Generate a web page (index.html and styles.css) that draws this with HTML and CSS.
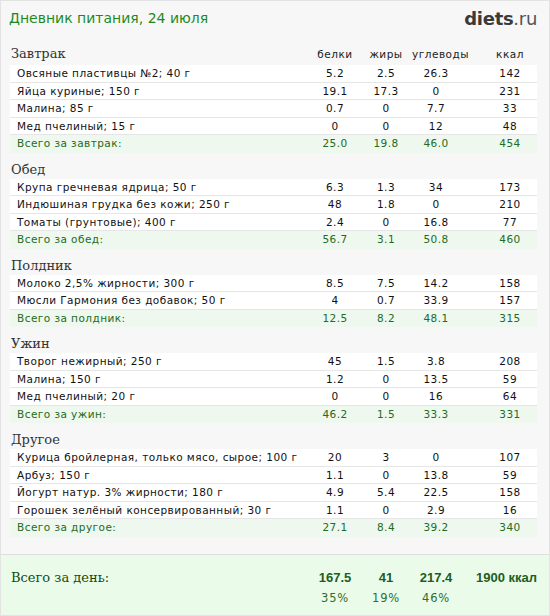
FILE: index.html
```html
<!DOCTYPE html>
<html lang="ru">
<head>
<meta charset="utf-8">
<title>Дневник питания</title>
<link rel="stylesheet" href="styles.css">
</head>
<body>
<div class="page">
  <div class="top">
    <div class="title">Дневник питания, 24 июля</div>
    <div class="logo"><b>diets</b>.ru</div>
  </div>

  <div class="content">
    <div class="sec-head first">
      <span class="sec-name">Завтрак</span>
      <span class="c">белки</span><span class="c">жиры</span><span class="c">углеводы</span><span class="c k">ккал</span>
    </div>
    <div class="tbl">
      <div class="row"><span class="n">Овсяные пластивцы №2; 40 г</span><span class="c">5.2</span><span class="c">2.5</span><span class="c">26.3</span><span class="c k">142</span></div>
      <div class="row"><span class="n">Яйца куриные; 150 г</span><span class="c">19.1</span><span class="c">17.3</span><span class="c">0</span><span class="c k">231</span></div>
      <div class="row"><span class="n">Малина; 85 г</span><span class="c">0.7</span><span class="c">0</span><span class="c">7.7</span><span class="c k">33</span></div>
      <div class="row"><span class="n">Мед пчелиный; 15 г</span><span class="c">0</span><span class="c">0</span><span class="c">12</span><span class="c k">48</span></div>
      <div class="row total"><span class="n">Всего за завтрак:</span><span class="c">25.0</span><span class="c">19.8</span><span class="c">46.0</span><span class="c k">454</span></div>
    </div>

    <div class="sec-head"><span class="sec-name">Обед</span></div>
    <div class="tbl">
      <div class="row"><span class="n">Крупа гречневая ядрица; 50 г</span><span class="c">6.3</span><span class="c">1.3</span><span class="c">34</span><span class="c k">173</span></div>
      <div class="row"><span class="n">Индюшиная грудка без кожи; 250 г</span><span class="c">48</span><span class="c">1.8</span><span class="c">0</span><span class="c k">210</span></div>
      <div class="row"><span class="n">Томаты (грунтовые); 400 г</span><span class="c">2.4</span><span class="c">0</span><span class="c">16.8</span><span class="c k">77</span></div>
      <div class="row total"><span class="n">Всего за обед:</span><span class="c">56.7</span><span class="c">3.1</span><span class="c">50.8</span><span class="c k">460</span></div>
    </div>

    <div class="sec-head"><span class="sec-name">Полдник</span></div>
    <div class="tbl">
      <div class="row"><span class="n">Молоко 2,5% жирности; 300 г</span><span class="c">8.5</span><span class="c">7.5</span><span class="c">14.2</span><span class="c k">158</span></div>
      <div class="row"><span class="n">Мюсли Гармония без добавок; 50 г</span><span class="c">4</span><span class="c">0.7</span><span class="c">33.9</span><span class="c k">157</span></div>
      <div class="row total"><span class="n">Всего за полдник:</span><span class="c">12.5</span><span class="c">8.2</span><span class="c">48.1</span><span class="c k">315</span></div>
    </div>

    <div class="sec-head"><span class="sec-name">Ужин</span></div>
    <div class="tbl">
      <div class="row"><span class="n">Творог нежирный; 250 г</span><span class="c">45</span><span class="c">1.5</span><span class="c">3.8</span><span class="c k">208</span></div>
      <div class="row"><span class="n">Малина; 150 г</span><span class="c">1.2</span><span class="c">0</span><span class="c">13.5</span><span class="c k">59</span></div>
      <div class="row"><span class="n">Мед пчелиный; 20 г</span><span class="c">0</span><span class="c">0</span><span class="c">16</span><span class="c k">64</span></div>
      <div class="row total"><span class="n">Всего за ужин:</span><span class="c">46.2</span><span class="c">1.5</span><span class="c">33.3</span><span class="c k">331</span></div>
    </div>

    <div class="sec-head"><span class="sec-name">Другое</span></div>
    <div class="tbl">
      <div class="row"><span class="n">Курица бройлерная, только мясо, сырое; 100 г</span><span class="c">20</span><span class="c">3</span><span class="c">0</span><span class="c k">107</span></div>
      <div class="row"><span class="n">Арбуз; 150 г</span><span class="c">1.1</span><span class="c">0</span><span class="c">13.8</span><span class="c k">59</span></div>
      <div class="row"><span class="n">Йогурт натур. 3% жирности; 180 г</span><span class="c">4.9</span><span class="c">5.4</span><span class="c">22.5</span><span class="c k">158</span></div>
      <div class="row"><span class="n">Горошек зелёный консервированный; 30 г</span><span class="c">1.1</span><span class="c">0</span><span class="c">2.9</span><span class="c k">16</span></div>
      <div class="row total"><span class="n">Всего за другое:</span><span class="c">27.1</span><span class="c">8.4</span><span class="c">39.2</span><span class="c k">340</span></div>
    </div>
  </div>

  <div class="footer">
    <div class="f-label">Всего за день:</div>
    <div class="f-val">167.5</div>
    <div class="f-val">41</div>
    <div class="f-val">217.4</div>
    <div class="f-val f-kcal">1900 ккал</div>
    <div class="f-pct p1">35%</div>
    <div class="f-pct p2">19%</div>
    <div class="f-pct p3">46%</div>
  </div>
</div>
</body>
</html>
```

FILE: styles.css
```css
html, body {
  margin: 0;
  padding: 0;
  background: #f7f7f7;
}

.page {
  box-sizing: border-box;
  width: 550px;
  height: 616px;
  border: 1px solid #e3e3e3;
  background: #f7f7f7;
  display: flex;
  flex-direction: column;
  font-family: "DejaVu Sans", Verdana, sans-serif;
}

.top {
  height: 38px;
  display: flex;
  align-items: center;
  justify-content: space-between;
  padding: 0 12px 0 8px;
}

.title {
  font-family: "DejaVu Sans", Verdana, sans-serif;
  font-size: 14px;
  color: #1e8a1e;
  margin-top: -4px;
}

.logo {
  font-family: "DejaVu Sans", sans-serif;
  font-size: 18px;
  color: #555;
  margin-top: -4px;
  letter-spacing: -0.3px;
}

.logo b {
  color: #3a3a3a;
  font-weight: bold;
}

.content {
  padding: 0 12px 0 9px;
}

.sec-head,
.row {
  display: grid;
  grid-template-columns: 1fr 50px 52px 48px 77px;
}

.sec-head {
  height: 26px;
  box-sizing: border-box;
  padding-top: 8px;
  line-height: 18px;
  align-items: baseline;
}

.sec-head.first {
  padding-top: 6px;
}

.sec-name {
  grid-column: 1;
  font-family: "DejaVu Serif", Georgia, serif;
  font-size: 13px;
  color: #333;
  padding-left: 1px;
}

.sec-head .c {
  font-size: 10.5px;
  color: #222;
  text-align: center;
  letter-spacing: 0.5px;
}

.row {
  height: 17.5px;
  box-sizing: border-box;
  background: #fff;
  border-bottom: 1px solid #e6e6e6;
  font-size: 10.5px;
  line-height: 16.5px;
  color: #111;
  letter-spacing: 0.45px;
}

.row .n {
  padding-left: 7px;
  white-space: nowrap;
}

.c {
  text-align: center;
}

.c.k {
  padding-left: 23px;
}

.row.total {
  background: #eef8ee;
  color: #236b23;
  border-bottom: none;
}

.footer {
  margin-top: auto;
  height: 61px;
  box-sizing: border-box;
  border-top: 1px solid #dedede;
  background: #ebfbea;
  padding: 13px 12px 0 10px;
  display: grid;
  grid-template-columns: 1fr 50px 52px 48px 77px;
  grid-template-rows: 19px 21px;
  align-items: center;
}

.f-label {
  grid-row: 1;
  grid-column: 1;
  font-family: "DejaVu Serif", Georgia, serif;
  font-size: 13px;
  color: #114d11;
}

.f-val {
  grid-row: 1;
  font-family: "Liberation Sans", Arial, sans-serif;
  font-weight: bold;
  font-size: 13px;
  color: #1d5e1d;
  text-align: center;
}

.f-val.f-kcal {
  text-align: right;
}

.f-pct {
  grid-row: 2;
  font-size: 11.5px;
  letter-spacing: 0.8px;
  color: #2d6e2d;
  text-align: center;
}

.p1 { grid-column: 2; }
.p2 { grid-column: 3; }
.p3 { grid-column: 4; }
```
